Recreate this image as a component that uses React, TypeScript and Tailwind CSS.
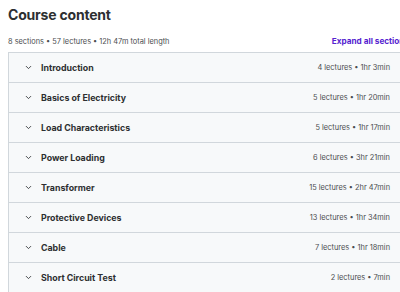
import { ChevronDown } from "lucide-react";

const sections = [
  { title: "Introduction", lectures: 4, length: "1hr 3min" },
  { title: "Basics of Electricity", lectures: 5, length: "1hr 20min" },
  { title: "Load Characteristics", lectures: 5, length: "1hr 17min" },
  { title: "Power Loading", lectures: 6, length: "3hr 21min" },
  { title: "Transformer", lectures: 15, length: "2hr 47min" },
  { title: "Protective Devices", lectures: 13, length: "1hr 34min" },
  { title: "Cable", lectures: 7, length: "1hr 18min" },
  { title: "Short Circuit Test", lectures: 2, length: "7min" },
];

export default function App() {
  return (
    <div className="w-[400px] h-[292px] overflow-hidden bg-white text-[#2d2f31]" style={{ fontFamily: "Inter, 'Noto Sans', sans-serif" }}>
      <div className="pl-2">
        <h2 className="pt-[5px] text-[14px] font-bold leading-[20px] tracking-[-0.2px]">Course content</h2>
        <div className="mt-[10px] flex items-center justify-between whitespace-nowrap">
          <span className="text-[7.4px] text-[#4b4d50]">8 sections • 57 lectures • 12h 47m total length</span>
          <span className="text-[8.2px] font-bold text-[#5624d0] -mr-[9px]">Expand all sections</span>
        </div>
        <div className="mt-[5px] border-t border-l border-[#d1d7dc] w-[400px]">
          {sections.map((s) => (
            <div key={s.title} className="flex h-[30px] items-center border-b border-[#d1d7dc] bg-[#f7f9fa] pl-[15px] pr-[18px]">
              <ChevronDown className="h-[9px] w-[9px] text-[#3e4143]" strokeWidth={2.5} />
              <span className="ml-[8px] text-[8.8px] font-bold">{s.title}</span>
              <span className="ml-auto text-[7.4px] text-[#4b4d50]">{s.lectures} lectures • {s.length}</span>
            </div>
          ))}
        </div>
      </div>
    </div>
  );
}
